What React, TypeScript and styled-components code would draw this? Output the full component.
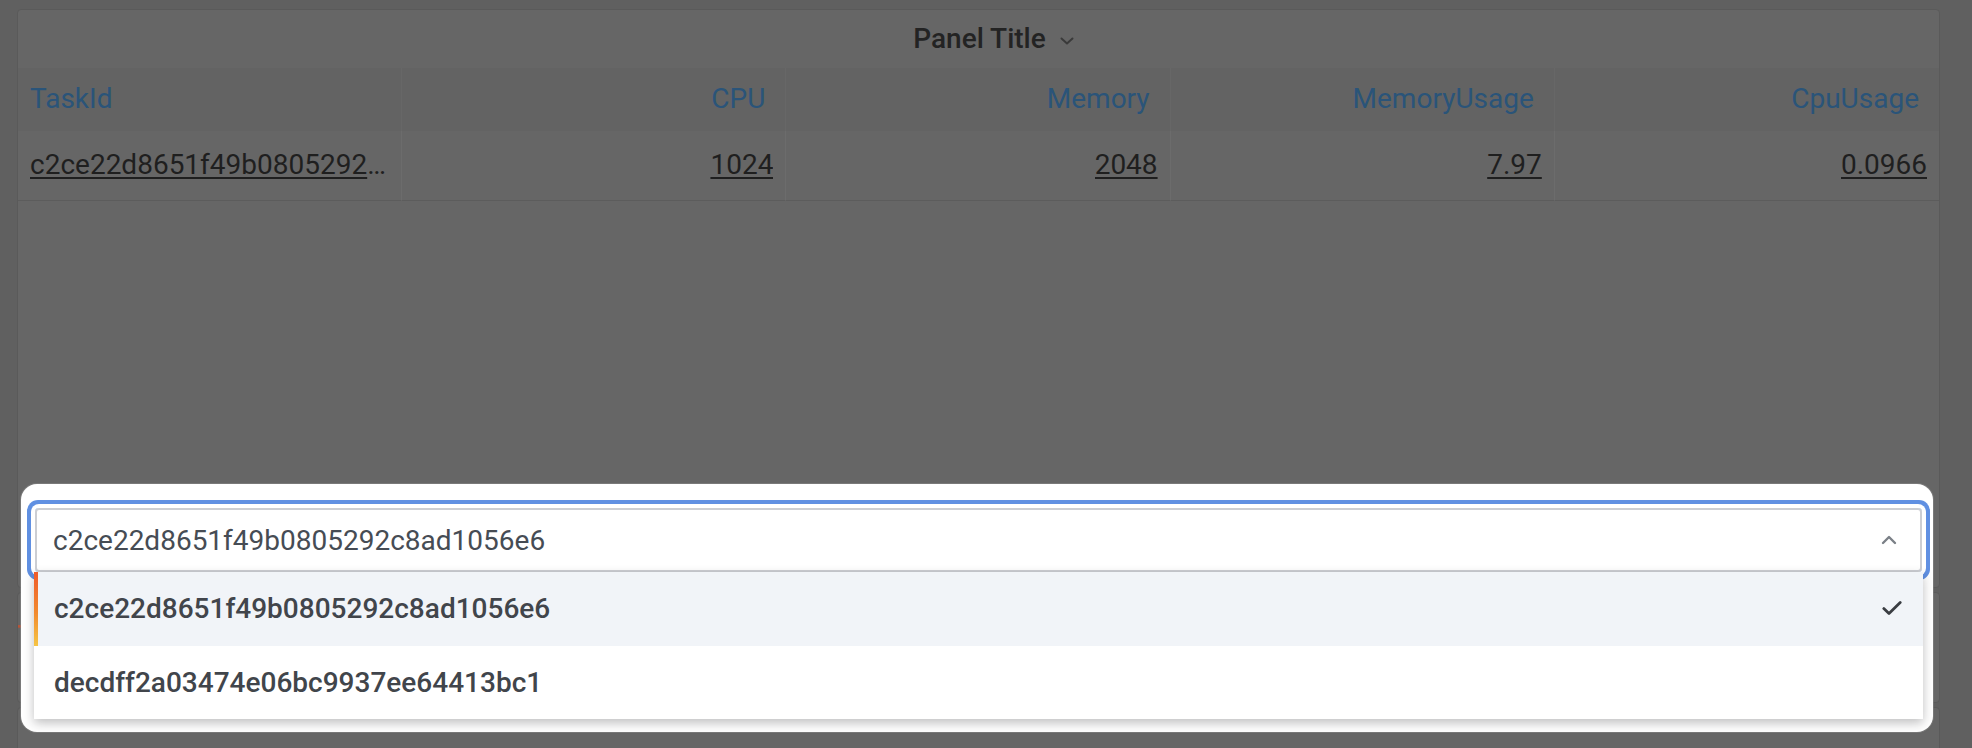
import React from 'react'
import styled, { createGlobalStyle } from 'styled-components'

const GlobalStyle = createGlobalStyle`
  html, body {
    margin: 0;
    padding: 0;
    background: #606060;
  }
  body {
    font-family: Roboto, "Liberation Sans", Arial, sans-serif;
  }
`

type Column = { title: string; value: string; align: 'left' | 'right' }

const columns: Column[] = [
  { title: 'TaskId', value: 'c2ce22d8651f49b0805292c8ad1056e6', align: 'left' },
  { title: 'CPU', value: '1024', align: 'right' },
  { title: 'Memory', value: '2048', align: 'right' },
  { title: 'MemoryUsage', value: '7.97', align: 'right' },
  { title: 'CpuUsage', value: '0.0966', align: 'right' },
]

const tasks = ['c2ce22d8651f49b0805292c8ad1056e6', 'decdff2a03474e06bc9937ee64413bc1']

export default function App() {
  return (
    <>
      <GlobalStyle />
      <Div_Page>
        <Div_Panel $height={579}>
          <Div_PanelHeader>
            <Span_Title>Panel Title</Span_Title>
            <ChevronDown />
          </Div_PanelHeader>
          <Div_Table>
            {columns.map(c => (
              <Div_HeaderCell key={c.title} $align={c.align}>
                {c.title}
              </Div_HeaderCell>
            ))}
            {columns.map(c => (
              <Div_DataCell key={c.title} $align={c.align}>
                <A_CellLink>{c.value}</A_CellLink>
              </Div_DataCell>
            ))}
          </Div_Table>
        </Div_Panel>
        <Div_Panel $height={111}>
          <Svg_Graph viewBox='0 0 1921 111' preserveAspectRatio='none'>
            <polyline points='0,34 1700,34' fill='none' stroke='#b4553a' strokeWidth='3' />
          </Svg_Graph>
        </Div_Panel>
        <Div_Panel $height={80} />
      </Div_Page>

      <Div_Spotlight>
        <Div_SelectBox>
          <Div_SelectInput>
            <Span_InputValue>{tasks[0]}</Span_InputValue>
            <ChevronUp />
          </Div_SelectInput>
        </Div_SelectBox>
        <Ul_Menu>
          {tasks.map((t, i) => (
            <Li_Option key={t} $active={i === 0}>
              <span>{t}</span>
              {i === 0 && <CheckIcon />}
            </Li_Option>
          ))}
        </Ul_Menu>
      </Div_Spotlight>
    </>
  )
}

const ChevronDown = () => (
  <Svg_TitleChevron viewBox='0 0 14 8'>
    <path d='M1.5 1.5 L7 6.5 L12.5 1.5' fill='none' stroke='#3a3a3a' strokeWidth='2' strokeLinecap='round' strokeLinejoin='round' />
  </Svg_TitleChevron>
)

const ChevronUp = () => (
  <Svg_InputChevron viewBox='0 0 16 10'>
    <path d='M2 8 L8 2 L14 8' fill='none' stroke='#7b8087' strokeWidth='2.4' strokeLinecap='round' strokeLinejoin='round' />
  </Svg_InputChevron>
)

const CheckIcon = () => (
  <Svg_Check viewBox='0 0 20 15'>
    <path d='M1.8 7.6 L7 12.6 L18.2 1.6' fill='none' stroke='#3a3d42' strokeWidth='2.8' strokeLinecap='round' strokeLinejoin='round' />
  </Svg_Check>
)

const Div_Page = styled.div`
  position: relative;
  height: 748px;
  overflow: hidden;
  box-sizing: border-box;
  padding: 9px 32px 0 17px;
  display: flex;
  flex-direction: column;
  gap: 4px;
`

const Div_Panel = styled.div<{ $height: number }>`
  position: relative;
  flex: 0 0 ${p => p.$height}px;
  box-sizing: border-box;
  background: #666666;
  border: 1px solid #5a5a5a;
  border-radius: 4px;
  overflow: hidden;
  display: flex;
  flex-direction: column;
`

const Div_PanelHeader = styled.div`
  height: 58px;
  display: flex;
  align-items: center;
  justify-content: center;
  gap: 14px;
  padding-left: 30px;
`

const Span_Title = styled.span`
  font-size: 28px;
  font-weight: 500;
  color: #232323;
  line-height: 1;
`

const Svg_TitleChevron = styled.svg`
  width: 14px;
  height: 8px;
  margin-top: 4px;
`

const Div_Table = styled.div`
  display: grid;
  grid-template-columns: repeat(5, 1fr);
  grid-template-rows: 63px 70px;
`

const Div_HeaderCell = styled.div<{ $align: 'left' | 'right' }>`
  display: flex;
  align-items: center;
  justify-content: ${p => (p.$align === 'left' ? 'flex-start' : 'flex-end')};
  padding: 0 ${p => (p.$align === 'left' ? '12px' : '20px')} 2px 12px;
  background: #636363;
  border-right: 1px solid #676767;
  font-size: 28px;
  color: #2a5479;
  &:nth-child(5) {
    border-right: none;
  }
`

const Div_DataCell = styled.div<{ $align: 'left' | 'right' }>`
  display: flex;
  align-items: center;
  justify-content: ${p => (p.$align === 'left' ? 'flex-start' : 'flex-end')};
  min-width: 0;
  padding: 0 12px;
  border-right: 1px solid #6c6c6c;
  border-bottom: 1px solid #5c5c5c;
  font-size: 28px;
  &:last-child {
    border-right: none;
  }
`

const A_CellLink = styled.a`
  color: #1f1f1f;
  text-decoration: underline;
  text-decoration-thickness: 2px;
  text-underline-offset: 3px;
  white-space: nowrap;
  overflow: hidden;
  text-overflow: ellipsis;
  padding-bottom: 6px;
  margin-top: 4px;
`

const Svg_Graph = styled.svg`
  width: 100%;
  height: 100%;
  display: block;
`

const Div_Spotlight = styled.div`
  position: absolute;
  left: 21px;
  top: 484px;
  width: 1912px;
  height: 248px;
  box-sizing: border-box;
  padding: 24px 11px 0 14px;
  background: #ffffff;
  border-radius: 16px;
  box-shadow: 0 0 0 1px rgba(140, 140, 140, 0.5);
`

const Div_SelectBox = styled.div`
  border-radius: 4px;
  box-shadow: 0 0 0 4px #ffffff, 0 0 0 8px #6090e2;
`

const Div_SelectInput = styled.div`
  height: 64px;
  box-sizing: border-box;
  display: flex;
  align-items: center;
  justify-content: space-between;
  padding: 0 23px 0 16px;
  border: 2px solid #ccced3;
  border-radius: 4px;
  background: #ffffff;
`

const Span_InputValue = styled.span`
  font-size: 28px;
  color: #464c54;
`

const Svg_InputChevron = styled.svg`
  width: 16px;
  height: 10px;
`

const Ul_Menu = styled.ul`
  list-style: none;
  margin: 0 -1px;
  padding: 0;
  background: #ffffff;
  box-shadow: 0 4px 10px rgba(24, 26, 27, 0.28);
  position: relative;
  z-index: 1;
`

const Li_Option = styled.li<{ $active: boolean }>`
  position: relative;
  height: 73.5px;
  box-sizing: border-box;
  display: flex;
  align-items: center;
  justify-content: space-between;
  padding: 0 21px 0 20px;
  font-size: 28px;
  font-weight: 500;
  color: #41454b;
  background: ${p => (p.$active ? '#f1f4f8' : '#ffffff')};
  &::before {
    content: '';
    display: ${p => (p.$active ? 'block' : 'none')};
    position: absolute;
    left: 0;
    top: 0;
    bottom: 0;
    width: 4px;
    background: linear-gradient(180deg, #ef5a2a 0%, #f28a2e 55%, #f6c545 100%);
  }
`

const Svg_Check = styled.svg`
  width: 20px;
  height: 15px;
`
